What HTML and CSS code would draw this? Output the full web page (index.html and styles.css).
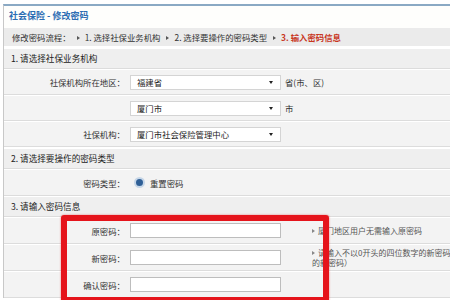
FILE: index.html
```html
<!DOCTYPE html>
<html lang="zh-CN">
<head>
<meta charset="UTF-8" />
<title>社会保险 - 修改密码</title>
<link rel="stylesheet" href="styles.css">
</head>
<body>
<div class="panel">
  <div class="title">社会保险 - 修改密码</div>
  <div class="steps">
    修改密码流程：<span class="arrow"></span>1. 选择社保业务机构<span class="arrow"></span>2. 选择要操作的密码类型<span class="arrow"></span><span class="current">3. 输入密码信息</span>
  </div>

  <div class="section">
    <div class="section-head">1. 请选择社保业务机构</div>
    <div class="row">
      <div class="label">社保机构所在地区：</div>
      <div class="select">福建省<span class="caret"></span></div>
      <div class="unit">省(市、区)</div>
    </div>
    <div class="row">
      <div class="label"></div>
      <div class="select">厦门市<span class="caret"></span></div>
      <div class="unit">市</div>
    </div>
    <div class="row">
      <div class="label">社保机构：</div>
      <div class="select">厦门市社会保险管理中心<span class="caret"></span></div>
      <div class="unit"></div>
    </div>
  </div>

  <div class="section">
    <div class="section-head">2. 请选择要操作的密码类型</div>
    <div class="row tall">
      <div class="label">密码类型：</div>
      <div class="radio-wrap"><span class="radio"></span>重置密码</div>
      <div class="unit"></div>
    </div>
  </div>

  <div class="section">
    <div class="section-head">3. 请输入密码信息</div>
    <div class="row tall">
      <div class="label">原密码：</div>
      <div class="input"></div>
      <div class="hint"><span class="arrow small"></span>厦门地区用户无需输入原密码</div>
    </div>
    <div class="row tall">
      <div class="label">新密码：</div>
      <div class="input"></div>
      <div class="hint"><span class="arrow small"></span>请输入不以0开头的四位数字的新密码<br>的新密码）</div>
    </div>
    <div class="row tall">
      <div class="label">确认密码：</div>
      <div class="input"></div>
      <div class="hint"></div>
    </div>
  </div>

  <!-- red marker drawn over the password fields -->
  <div class="red-mark"></div>
</div>
</body>
</html>
```

FILE: styles.css
```css
body {
  margin: 0;
  background: #fff;
  font-family: "Noto Sans CJK SC", "Liberation Sans", sans-serif;
  color: #333;
  overflow: hidden;
}
.panel {
  position: relative;
  margin: 4px 0 0 3px;
  border-top: 2px solid #8aa9c4;
  border-left: 1px solid #c8c8c8;
  width: 460px;
}
.title {
  height: 22px;
  line-height: 20px;
  padding-left: 5px;
  font-size: 9px;
  font-weight: 700;
  color: #2c6db3;
  background: #fefefc;
}
.steps {
  height: 18px;
  line-height: 18px;
  padding-left: 8px;
  font-size: 8.4px;
  color: #333;
  background: #ebebeb;
  white-space: nowrap;
  margin-bottom: 3px;
}
.arrow {
  display: inline-block;
  width: 0;
  height: 0;
  border-left: 3px solid #555;
  border-top: 2.5px solid transparent;
  border-bottom: 2.5px solid transparent;
  margin: 0 5px 0 6px;
  vertical-align: 1px;
}
.current {
  color: #c8371e;
  font-weight: 700;
}
.section {
  margin-bottom: 2px;
}
.section + .section + .section {
  margin-top: -1px;
}
.section-head {
  height: 19px;
  line-height: 19px;
  padding-left: 7px;
  font-size: 8.6px;
  color: #222;
  background: #efefef;
  border-bottom: 1px solid #dcdcdc;
}
.row {
  display: grid;
  grid-template-columns: 122px 151px 1fr;
  column-gap: 4px;
  align-items: center;
  height: 24px;
  font-size: 8.4px;
  background: #f3f3f3;
  border-top: 1px solid #fff;
  border-bottom: 1px solid #dcdcdc;
}
.row.tall {
  height: 25px;
}
.label {
  text-align: right;
  padding-right: 1px;
  color: #333;
}
.select {
  position: relative;
  height: 13px;
  line-height: 13px;
  padding-left: 6px;
  background: #fff;
  border: 1px solid #d4d4d4;
  color: #222;
}
.caret {
  position: absolute;
  right: 7px;
  top: 5px;
  border-top: 3px solid #222;
  border-left: 2.5px solid transparent;
  border-right: 2.5px solid transparent;
}
.unit {
  color: #333;
}
.radio-wrap {
  display: flex;
  align-items: center;
  gap: 5px;
  padding-left: 4px;
}
.radio {
  width: 7px;
  height: 7px;
  border-radius: 50%;
  background: #2f5f96;
  border: 2px solid #c7d7e8;
}
.input {
  height: 13px;
  background: #fff;
  border: 1px solid #bdbdbd;
}
.hint {
  padding-left: 27px;
  font-size: 8px;
  line-height: 10px;
  color: #555;
}
.arrow.small {
  border-left-color: #888;
  margin: 0 3px 0 0;
}
.red-mark {
  position: absolute;
  left: 57px;
  top: 209px;
  width: 268px;
  height: 88px;
  box-sizing: border-box;
  border: 6px solid #e5141b;
  border-radius: 3px;
  box-shadow: 0 0 2px rgba(229, 20, 27, 0.6);
}
```
